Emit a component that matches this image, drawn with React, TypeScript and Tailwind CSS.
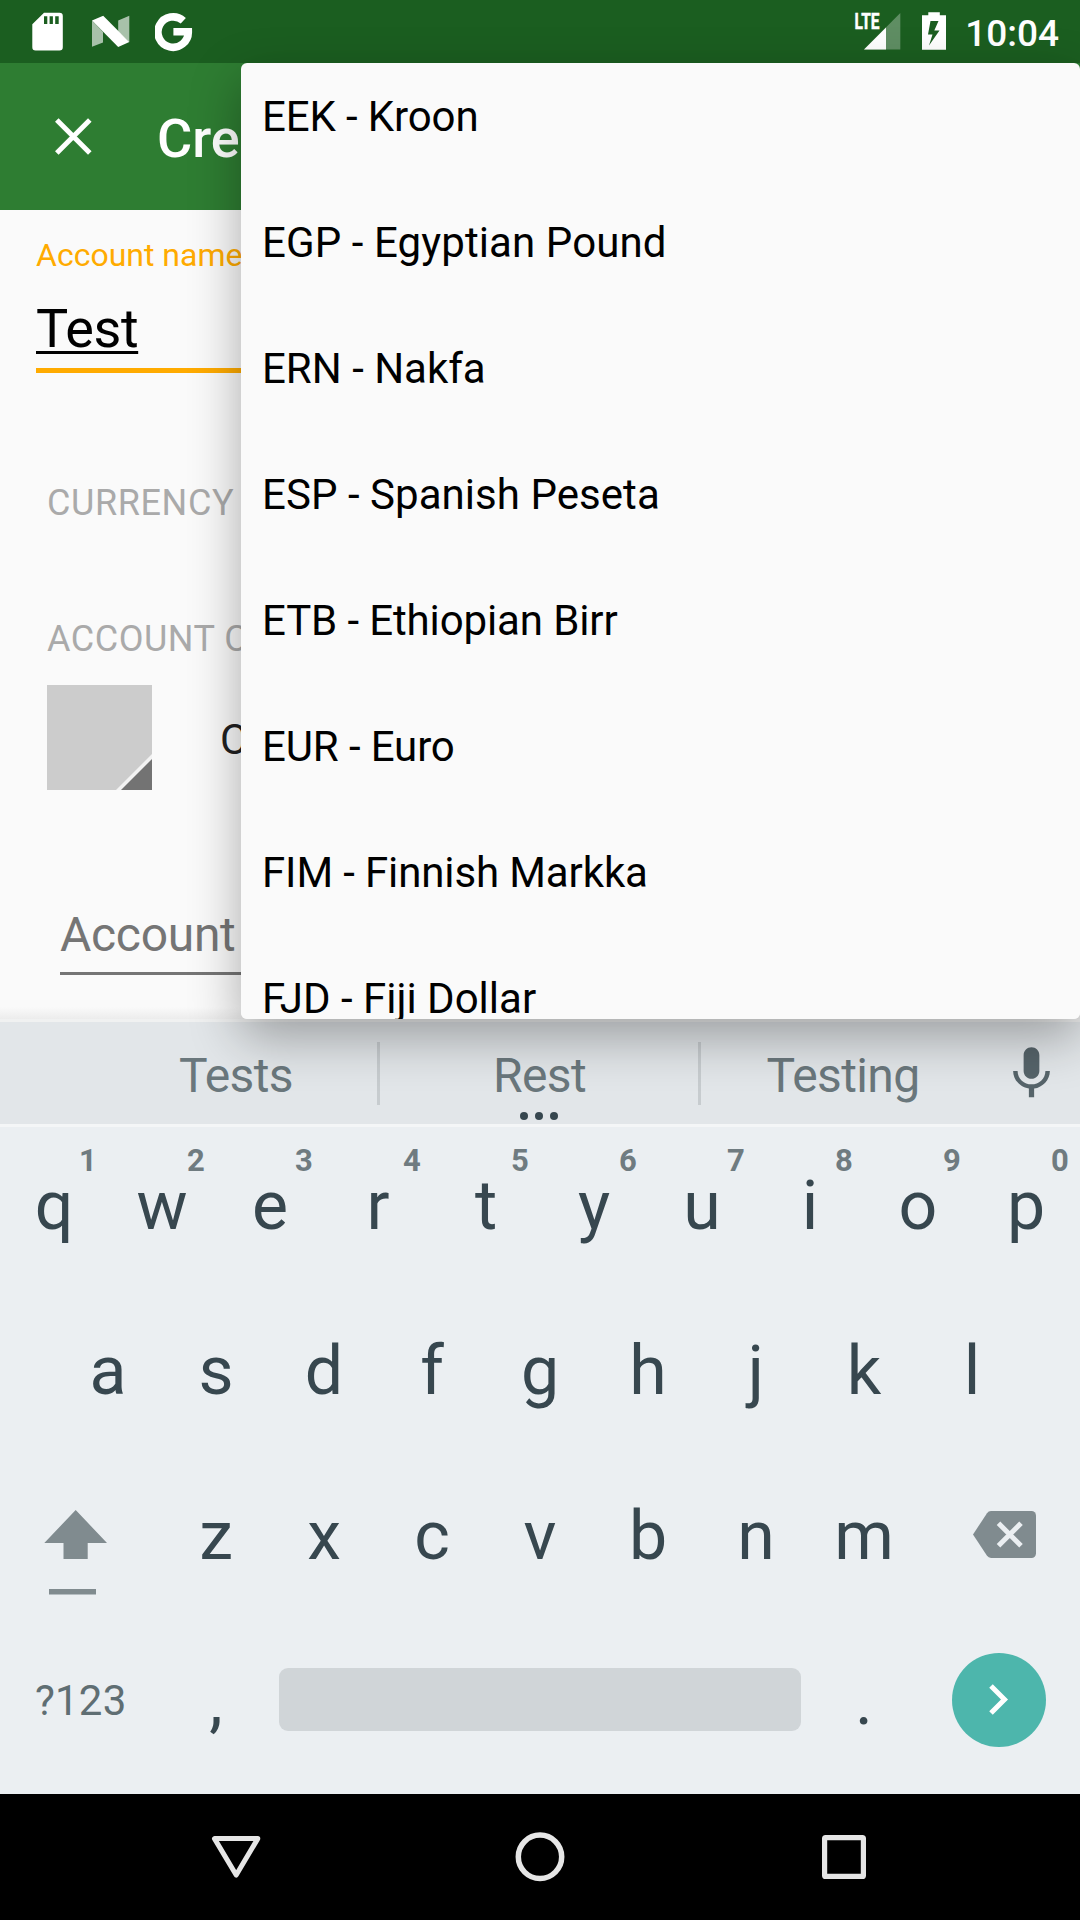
import React from "react";

const currencies = [
  { name: "EEK - Kroon", spacing: "tracking-[-0.120px]" },
  { name: "EGP - Egyptian Pound", spacing: "tracking-[0.100px]" },
  { name: "ERN - Nakfa", spacing: "tracking-normal" },
  { name: "ESP - Spanish Peseta", spacing: "tracking-[0.050px]" },
  { name: "ETB - Ethiopian Birr", spacing: "tracking-[-0.120px]" },
  { name: "EUR - Euro", spacing: "tracking-[-0.120px]" },
  { name: "FIM - Finnish Markka", spacing: "tracking-[-0.120px]" },
  { name: "FJD - Fiji Dollar", spacing: "tracking-normal" },
];

function StatusBar() {
  return (
    <header className="flex h-[63px] shrink-0 items-center bg-[#1b5e20] text-white">
      <svg className="ml-8 h-[63px] w-[31px]" viewBox="32 0 31 63" fill="#fff">
        <path
          fillRule="evenodd"
          d="M44 12.7H59.5a3.3 3.3 0 0 1 3.3 3.3V47.3a3.3 3.3 0 0 1-3.3 3.3H35.6a3.3 3.3 0 0 1-3.3-3.3V24.3ZM44 16.3V24h3.3v-7.700ZM49.600 16.300V24h3.300v-7.700ZM55.200 16.300V24h3.500v-7.700Z"
        />
      </svg>
      <svg className="ml-7 h-[63px] w-[40px]" viewBox="91 0 40 63" fill="#fff">
        <path opacity=".62" d="M92 20.500 103 32v10.500L92 46.800ZM118.200 20.500 129.300 15.800V42L118.200 31.500Z" />
        <path d="M92 20.500 103.200 15.800 129.300 42 118.200 47Z" />
      </svg>
      <svg className="ml-6 h-[63px] w-[38px]" viewBox="155 0 38 63" fill="none" stroke="#fff" strokeWidth="7.600">
        <path d="M183.300 20.800A15.200 15.200 0 1 0 188.300 31.800H173.400" />
      </svg>
      <div className="flex-1" />
      <svg className="h-[63px] w-[47px]" viewBox="854 0 47 63" fill="#fff">
        <text
          x="854.500"
          y="29.200"
          fontFamily="Roboto, sans-serif"
          fontWeight="700"
          fontSize="22"
          textLength="25"
          lengthAdjust="spacingAndGlyphs"
          stroke="#fff"
          strokeWidth="0.500"
        >
          LTE
        </text>
        <path opacity=".3" d="M864 49.500 900.300 13v36.500Z" />
        <path d="M864 49.500 886 27.400v22.100Z" />
      </svg>
      <svg className="ml-[21px] h-[63px] w-6" viewBox="922 0 24 63" fill="#fff">
        <path
          fillRule="evenodd"
          d="M928.300 12.300h11.500v3H946V49.700H922V15.300h6.300ZM930.500 21 928 34.500h4.500L929 45.500 939.500 30.500h-5.200L938.500 21Z"
        />
      </svg>
      <div className="ml-[19px] mr-[21px] pt-1 text-[37px] font-medium leading-none">10:04</div>
    </header>
  );
}

function AppBar() {
  return (
    <div className="flex h-[147px] shrink-0 items-center bg-[#2e7d32] text-white">
      <svg className="ml-[54px] h-10 w-10" viewBox="0 0 40 40" fill="none" stroke="#fff" strokeWidth="5">
        <path d="M2.800 3 35.800 36M35.800 3 2.800 36" />
      </svg>
      <div className="ml-[63px] pt-1 text-[54px] font-medium leading-none">Cre</div>
    </div>
  );
}

function Form() {
  return (
    <main className="flex h-[812px] shrink-0 flex-col overflow-hidden bg-[#fafafa]">
      <label className="ml-9 mt-[25px] text-[32px] leading-10 text-[#ffab00]">Account name</label>
      <div className="ml-9 mt-[22px] text-[54px] leading-[64px] tracking-[-0.4px] text-black underline decoration-[3px] underline-offset-[4px] [text-decoration-skip-ink:none]">
        Test
      </div>
      <div className="ml-9 mt-[7px] h-[5px] shrink-0 bg-[#ffab00]" />
      <div className="ml-[47px] mt-[108px] text-[36px] leading-[44px] tracking-[0.600px] text-[#aaaaaa]">CURRENCY</div>
      <div className="ml-[47px] mt-[92px] whitespace-nowrap text-[36px] leading-[44px] tracking-[0.500px] text-[#aaaaaa]">
        ACCOUNT C
      </div>
      <div className="ml-[47px] mt-6 flex h-[105px] shrink-0 items-center">
        <svg className="h-[105px] w-[105px]" viewBox="0 0 105 105">
          <path fill="#cccccc" d="M0 0H105V105H0Z" />
          <path fill="#f3f3f3" d="M105 69V105H69Z" />
          <path fill="#737373" d="M105 74V105H74Z" />
        </svg>
        <div className="ml-[68px] pt-1 text-[42px] leading-none text-[#212121]">C</div>
      </div>
      <div className="ml-[60px] mt-[115px] text-[48px] leading-[60px] tracking-[-0.300px] text-[#757575]">Account</div>
      <div className="ml-[60px] mt-[7px] h-[3px] shrink-0 bg-[#757575]" />
      <div className="flex-1" />
      <div className="h-3 shrink-0 bg-linear-to-b from-[#fafafa] to-[#ececec]" />
      <div className="h-[3px] shrink-0 bg-[#f0f1f1]" />
    </main>
  );
}

function CurrencyMenu() {
  return (
    <div className="absolute left-[241px] top-[63px] h-[956px] w-[839px] rounded-[6px] shadow-[0_18px_52px_rgba(0,0,0,0.32)]">
      <ul className="h-full overflow-hidden rounded-[6px] bg-[#fafafa]">
        {currencies.map(({ name, spacing }) => (
          <li
            key={name}
            className={`flex h-[126px] items-center pl-[21px] text-[42px] leading-none text-black first:-mt-[9px] ${spacing}`}
          >
            {name}
          </li>
        ))}
      </ul>
    </div>
  );
}

function Suggestions() {
  return (
    <div className="relative flex h-[105px] shrink-0 items-center border-b-[3px] border-[#f4f6f7] bg-[#e2e6e9] text-[48px] leading-none tracking-[-0.600px] text-[#6a777c]">
      <div className="ml-[95px] w-[282px] pt-1.5 text-center">Tests</div>
      <div className="h-[63px] w-[3px] bg-[#c7cccf]" />
      <div className="w-[318px] pl-px pt-1.5 text-center">Rest</div>
      <div className="h-[63px] w-[3px] bg-[#c7cccf]" />
      <div className="w-[284px] pt-1.5 text-center">Testing</div>
      <svg className="ml-[15px] h-[63px] w-[63px]" viewBox="0 0 24 24" fill="#56646a">
        <path d="M12 14c1.660 0 2.990-1.340 2.990-3L15 5c0-1.660-1.340-3-3-3S9 3.340 9 5v6c0 1.660 1.340 3 3 3zm5.300-3c0 3-2.540 5.100-5.300 5.100S6.700 14 6.700 11H5c0 3.410 2.720 6.230 6 6.720V21h2v-3.280c3.280-.480 6-3.300 6-6.720h-1.700z" />
      </svg>
      <div className="absolute bottom-1 left-[520px] flex gap-[7px]">
        <i className="size-2 rounded-full bg-[#37474f]" />
        <i className="size-2 rounded-full bg-[#37474f]" />
        <i className="size-2 rounded-full bg-[#37474f]" />
      </div>
    </div>
  );
}

function Key({ label, digit }: { label: string; digit?: string }) {
  return (
    <div className="relative flex h-full w-[108px] items-center justify-center">
      {label}
      {digit && (
        <span className="absolute left-[69px] top-[15px] w-[38px] text-center text-[31px] font-bold leading-[38px] text-[#6f7b80]">
          {digit}
        </span>
      )}
    </div>
  );
}

function Keyboard() {
  return (
    <section className="flex h-[667px] shrink-0 flex-col bg-[#ebeff2] text-[68px] leading-none text-[#37474f]">
      <div className="mb-[3px] flex h-[158px]">
        {"qwertyuiop".split("").map((k, i) => (
          <Key key={k} label={k} digit={String((i + 1) % 10)} />
        ))}
      </div>
      <div className="flex h-[165px] justify-center">
        {"asdfghjkl".split("").map((k) => (
          <Key key={k} label={k} />
        ))}
      </div>
      <div className="flex h-[165px]">
        <svg className="h-[165px] w-[162px]" viewBox="0 1453 162 165" fill="#808b8f">
          <path d="M75.700 1510 107 1543H87.700V1559H63.500V1543H44.300ZM49 1589H96V1594.600H49Z" />
        </svg>
        {"zxcvbnm".split("").map((k) => (
          <Key key={k} label={k} />
        ))}
        <svg className="h-[165px] w-[162px]" viewBox="918 1453 162 165">
          <path
            fill="#808b8f"
            d="M991 1511H1031.500a4.500 4.500 0 0 1 4.500 4.500V1553.500a4.500 4.500 0 0 1-4.500 4.500H991a5 5 0 0 1-4-2.200L973 1534.500 987 1513.200a5 5 0 0 1 4-2.200Z"
          />
          <path fill="none" stroke="#ebeff2" strokeWidth="5" d="M998.500 1523.300 1021 1545.800M1021 1523.300 998.500 1545.800" />
        </svg>
      </div>
      <div className="flex h-[165px] items-center">
        <div className="w-[162px] pl-[35px] text-[42px] tracking-[0.200px] text-[#5f6e73]">?123</div>
        <Key label="," />
        <div className="mb-[2px] ml-[9px] mr-[9px] h-[63px] w-[522px] rounded-[9px] bg-[#d0d5d8]" />
        <Key label="." />
        <div className="mb-[2px] ml-[34px] flex h-[94px] w-[94px] items-center justify-center rounded-full bg-[#4db6ac]">
          <svg className="h-8 w-5" viewBox="0 0 20 32" fill="none" stroke="#fff" strokeWidth="5">
            <path d="M2 2 15.500 15.500 2 29" />
          </svg>
        </div>
      </div>
    </section>
  );
}

function NavBar() {
  return (
    <nav className="flex h-[126px] shrink-0 items-center bg-black">
      <svg
        className="ml-[206px] h-[60px] w-[60px]"
        viewBox="206 1827 60 60"
        fill="none"
        stroke="#e6e6e6"
        strokeWidth="5"
        strokeLinejoin="round"
      >
        <path d="M214.500 1838.600H257.800L236.200 1875Z" />
      </svg>
      <svg className="ml-[244px] h-[60px] w-[60px]" viewBox="510 1827 60 60" fill="none" stroke="#e6e6e6" strokeWidth="5.500">
        <circle cx="540" cy="1856.800" r="21.700" />
      </svg>
      <svg
        className="ml-[244px] h-[60px] w-[60px]"
        viewBox="814 1827 60 60"
        fill="none"
        stroke="#e6e6e6"
        strokeWidth="5.200"
        strokeLinejoin="round"
      >
        <rect x="824.600" y="1837.600" width="38.800" height="38.800" rx="1" />
      </svg>
    </nav>
  );
}

export default function App() {
  return (
    <div className="relative flex h-[1920px] w-[1080px] flex-col overflow-hidden font-[Roboto,sans-serif]">
      <StatusBar />
      <AppBar />
      <Form />
      <Suggestions />
      <Keyboard />
      <NavBar />
      <CurrencyMenu />
    </div>
  );
}
